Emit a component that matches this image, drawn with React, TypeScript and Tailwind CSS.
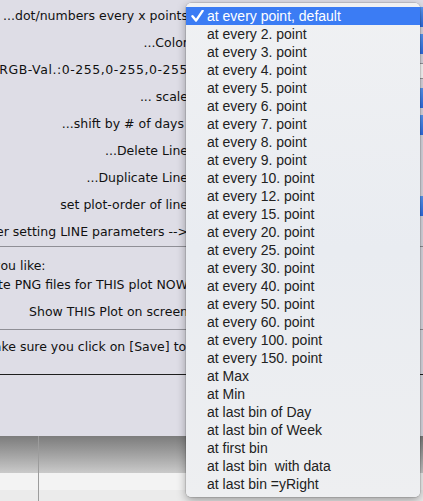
const everyOptions = [
  'at every point, default',
  'at every 2. point',
  'at every 3. point',
  'at every 4. point',
  'at every 5. point',
  'at every 6. point',
  'at every 7. point',
  'at every 8. point',
  'at every 9. point',
  'at every 10. point',
  'at every 12. point',
  'at every 15. point',
  'at every 20. point',
  'at every 25. point',
  'at every 30. point',
  'at every 40. point',
  'at every 50. point',
  'at every 60. point',
  'at every 100. point',
  'at every 150. point',
  'at Max',
  'at Min',
  'at last bin of Day',
  'at last bin of Week',
  'at first bin',
  'at last bin  with data',
  'at last bin =yRight',
]

type Control = 'popup' | 'field' | 'none'

const lineRows: { label: string; control: Control; wide?: boolean }[] = [
  { label: '...dot/numbers every x points', control: 'popup' },
  { label: '...Color', control: 'popup' },
  { label: '...RGB-Val.:0-255,0-255,0-255', control: 'field', wide: true },
  { label: '... scale', control: 'popup' },
  { label: '...shift by # of days\u00a0', control: 'popup' },
  { label: '...Delete Line', control: 'none' },
  { label: '...Duplicate Line', control: 'none' },
  { label: 'set plot-order of line', control: 'popup' },
  { label: 'after setting LINE parameters -->', control: 'none' },
]

function RowControl({ kind }: { kind: Control }) {
  if (kind === 'popup')
    return <div className="ml-auto mr-[-6px] h-[20px] w-[24px] rounded-[4px] bg-gradient-to-b from-[#5a9af8] to-[#2f6fe8]" />
  if (kind === 'field')
    return <div className="ml-auto mr-[-6px] h-[16px] w-[60px] border border-[#9a9aa0] bg-white" />
  return null
}

function CheckMark() {
  return (
    <svg className="absolute left-[5px] top-[3px]" width="13" height="12" viewBox="0 0 13 12">
      <path d="M1.5 6.2 L5 10.6 L11.6 0.8" fill="none" stroke="white" strokeWidth="2.4" strokeLinecap="round" strokeLinejoin="round" />
    </svg>
  )
}

function PointsMenu({ selected }: { selected: number }) {
  return (
    <div className="absolute left-[186px] top-[3px] w-[234px] h-[494px] rounded-[5px] bg-gradient-to-b from-[#f0f1f3] via-[#e9ecf1] to-[#eeeff1] py-[4px] shadow-[0_3px_10px_rgba(0,0,0,0.35),0_0_0_0.5px_rgba(0,0,0,0.2)] font-['Liberation_Sans',Arial,sans-serif] text-[14px] text-[#222]">
      {everyOptions.map((opt, i) => (
        <div
          key={opt}
          className={
            i === selected
              ? 'relative flex h-[18px] items-center pl-[21px] whitespace-pre bg-[#3b7cf4] text-white'
              : 'relative flex h-[18px] items-center pl-[21px] whitespace-pre'
          }
        >
          {i === selected && <CheckMark />}
          {opt}
        </div>
      ))}
    </div>
  )
}

export default function App() {
  return (
    <div className="relative w-[423px] h-[501px] overflow-hidden bg-[#ececec] font-['DejaVu_Sans',sans-serif] text-[12.5px] text-[#111]">
      <div className="flex h-[436px] flex-col overflow-hidden bg-[#dedde6]">
        <div className="flex flex-col pt-[3px]">
          {lineRows.map(row => (
            <div key={row.label} className="flex h-[27px] items-center">
              <div className="w-[188px] shrink-0 whitespace-nowrap text-right flex justify-end">
                <span className={row.wide ? 'tracking-[0.55px]' : ''}>{row.label}</span>
              </div>
              <RowControl kind={row.control} />
            </div>
          ))}
        </div>
        <div className="h-px bg-[#8f8f96]" />
        <div className="pt-[10px]">
          <div className="flex h-[19px] items-center whitespace-nowrap ml-[-7px]">you like:</div>
          <div className="flex h-[19px] w-[188px] items-center justify-end whitespace-nowrap">
            <span>Create PNG files for THIS plot NOW</span>
          </div>
          <div className="flex h-[34px] w-[188px] items-center justify-end whitespace-nowrap">
            <span>Show THIS Plot on screen</span>
          </div>
        </div>
        <div className="h-px bg-[#8f8f96]" />
        <div className="flex h-[34px] items-center whitespace-nowrap ml-[-17px]">
          Make sure you click on [Save] to keep the changes
        </div>
        <div className="mt-[10px] h-px bg-[#1e1e1e]" />
      </div>

      {/* window backdrop below the sheet */}
      <div className="relative h-[65px]">
        <div className="h-[37px] bg-gradient-to-b from-[#7c7c7c] to-[#cacaca]" />
        <div className="h-[17px] bg-[#f3f3f3]" />
        <div className="h-[11px] bg-[#ebebeb]" />
        <div className="absolute left-[38px] top-0 h-full w-px bg-[#9c9c9c]" />
      </div>

      <PointsMenu selected={0} />
    </div>
  )
}
